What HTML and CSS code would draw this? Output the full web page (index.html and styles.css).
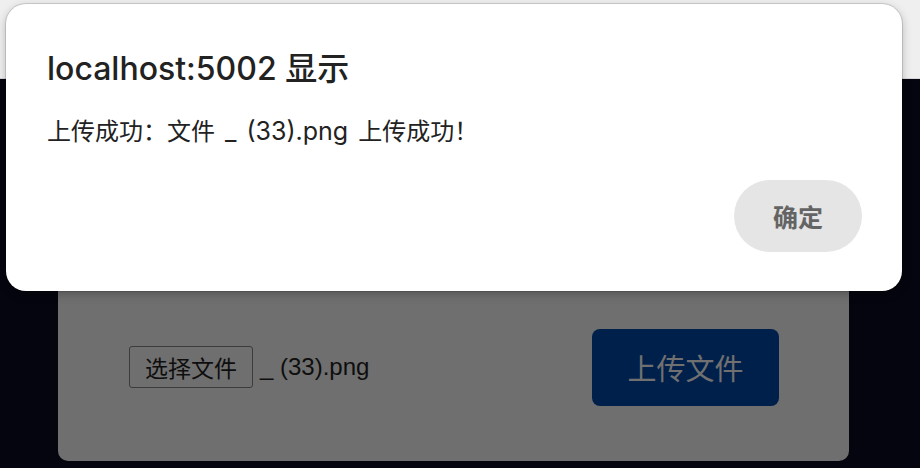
FILE: index.html
```html
<!DOCTYPE html>
<html lang="zh-CN">
<head>
<meta charset="utf-8">
<title>上传</title>
<link rel="stylesheet" href="styles.css">
</head>
<body>
  <div class="topbar"></div>
  <main class="main">
    <section class="card">
      <div class="file-field">
        <span class="file-btn">选择文件</span>
        <span class="file-name">_ (33).png</span>
      </div>
      <span class="upload-btn">上传文件</span>
    </section>
  </main>
  <div class="dialog" role="alertdialog">
    <h1 class="dialog-title">localhost:5002 显示</h1>
    <p class="dialog-msg">上传成功：文件<span class="msg-latin"> _ (33).png </span>上传成功！</p>
    <div class="dialog-actions">
      <span class="ok-btn">确定</span>
    </div>
  </div>
</body>
</html>
```
FILE: styles.css
```css
html, body {
  margin: 0;
  padding: 0;
}
body {
  width: 920px;
  height: 468px;
  overflow: hidden;
  background: #05050f;
  font-family: "Inter", "Noto Sans CJK SC", sans-serif;
  position: relative;
}
.topbar {
  height: 78px;
  background: #efefef;
  border-bottom: 1px solid #d6d6d6;
}
.main {
  padding: 151px 0 0 58px;
}
.card {
  width: 650px;
  height: 188px;
  padding: 43px 70px 0 71px;
  box-sizing: content-box;
  background: #6f6f6f;
  border-radius: 10px;
  display: flex;
  align-items: center;
  justify-content: space-between;
}
.file-field {
  display: flex;
  align-items: center;
  gap: 7px;
  color: #0e0e0e;
  font-size: 24px;
}
.file-btn {
  display: flex;
  align-items: center;
  justify-content: center;
  width: 122px;
  height: 40px;
  border: 1px solid #3c3c3c;
  border-radius: 3px;
  font-size: 23px;
}
.file-name {
  font-family: "Liberation Sans", "Noto Sans CJK SC", sans-serif;
  font-size: 24px;
}
.upload-btn {
  display: flex;
  align-items: center;
  justify-content: center;
  width: 187px;
  height: 77px;
  background: #00204c;
  color: #707070;
  border-radius: 8px;
  font-size: 29px;
}
.dialog {
  position: absolute;
  left: 6px;
  top: 4px;
  width: 896px;
  height: 287px;
  box-sizing: border-box;
  background: #fff;
  border-radius: 20px;
  box-shadow: 0 0 0 1px rgba(0,0,0,0.12), 0 3px 10px rgba(0,0,0,0.25);
  padding: 45px 40px 39px 41px;
  display: flex;
  flex-direction: column;
}
.dialog-title {
  margin: 0;
  font-size: 32px;
  line-height: 40px;
  font-weight: 500;
  color: #222;
}
.dialog-msg {
  margin: 26px 0 0;
  font-size: 24px;
  line-height: 32px;
  color: #222;
}
.msg-latin {
  font-size: 25px;
  word-spacing: 3px;
}
.dialog-actions {
  margin-top: auto;
  display: flex;
  justify-content: flex-end;
}
.ok-btn {
  display: flex;
  align-items: center;
  justify-content: center;
  width: 128px;
  height: 72px;
  border-radius: 36px;
  background: #e5e5e5;
  color: #646464;
  font-size: 25px;
  font-weight: 700;
}
```
